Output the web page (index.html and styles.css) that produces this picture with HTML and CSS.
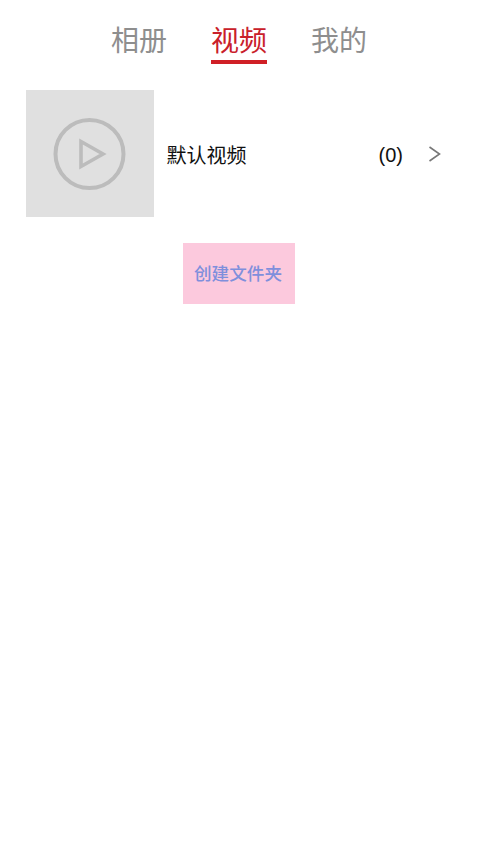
FILE: index.html
```html
<!doctype html>
<html>
<head>
<meta charset="utf-8">
<title>视频</title>
<link rel="stylesheet" href="styles.css">
</head>
<body>
<div class="tabs">
	<a class="tab">相册</a>
	<a class="tab active">视频</a>
	<a class="tab">我的</a>
</div>
<div class="row">
	<div class="thumb">
		<svg width="74" height="74" viewBox="0 0 74 74">
			<circle cx="36.5" cy="37" r="34" fill="none" stroke="#bcbcbc" stroke-width="4"/>
			<path d="M28 24.5 L50 37 L28 49.5 Z" fill="none" stroke="#bcbcbc" stroke-width="3.6"/>
		</svg>
	</div>
	<div class="name">默认视频</div>
	<div class="count">(0)</div>
	<svg class="arrow" width="14" height="18" viewBox="0 0 14 18">
		<path d="M1.5 2 L11.5 9 L1.5 16" fill="none" stroke="#777" stroke-width="1.6"/>
	</svg>
</div>
<div class="create-wrap">
	<a class="create">创建文件夹</a>
</div>
</body>
</html>
```

FILE: styles.css
```css
body{margin:0; background:#fff; font-family:"Liberation Sans","Noto Sans CJK SC",sans-serif;}
.tabs{display:flex; justify-content:center; gap:44px; padding-top:23px; height:41px;}
.tab{display:block; height:37px; font-size:28px; line-height:38px; color:#8e8e8e;}
.tab.active{color:#c9202a; border-bottom:4px solid #d01f26;}
.row{display:flex; align-items:center; margin-top:26px; padding-left:25.5px;}
.thumb{display:flex; align-items:center; justify-content:center; width:128px; height:127px; background:#e0e0e0;}
.name{margin-left:13px; margin-top:2px; width:212px; font-size:20px; color:#111;}
.count{width:49px; margin-top:3px; font-size:20px; color:#111;}
.arrow{margin-top:1px;}
.create-wrap{display:flex; justify-content:center; margin-top:26px;}
.create{display:block; width:112px; height:61px; line-height:63px; text-align:center; text-indent:-2px; font-size:17.6px; font-weight:500; color:#7f8fdc; background:#fcc9dd;}
```
